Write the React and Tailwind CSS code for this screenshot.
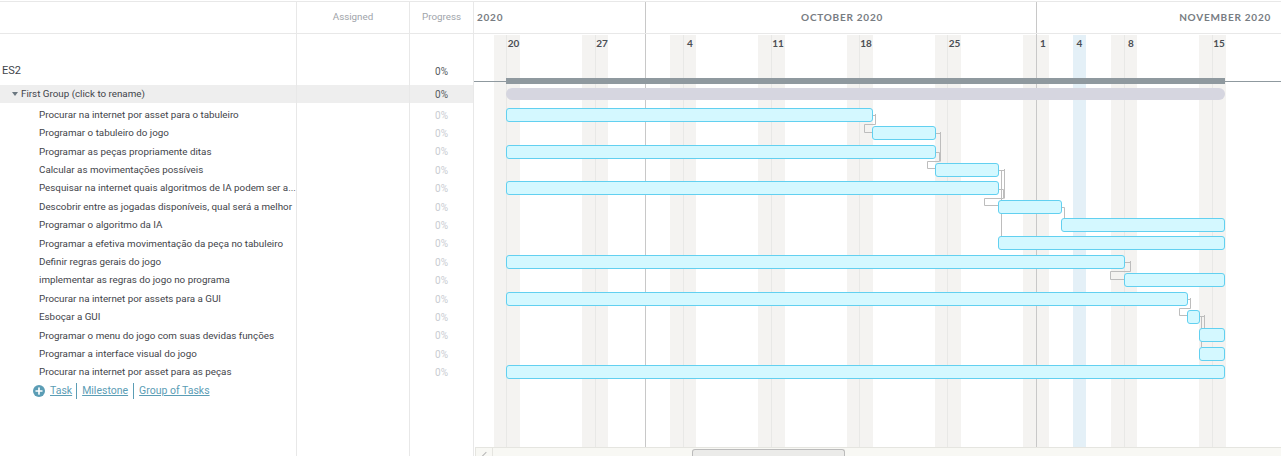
import { Plus } from 'lucide-react'

const tasks = [
  { name: 'Procurar na internet por asset para o tabuleiro', from: 506, to: 873, top: 108 },
  { name: 'Programar o tabuleiro do jogo', from: 872, to: 936, top: 126 },
  { name: 'Programar as peças propriamente ditas', from: 506, to: 936, top: 145 },
  { name: 'Calcular as movimentações possíveis', from: 935, to: 999, top: 163 },
  { name: 'Pesquisar na internet quais algoritmos de IA podem ser a...', from: 506, to: 999, top: 181 },
  { name: 'Descobrir entre as jogadas disponíveis, qual será a melhor', from: 998, to: 1062, top: 200 },
  { name: 'Programar o algoritmo da IA', from: 1061, to: 1225, top: 218 },
  { name: 'Programar a efetiva movimentação da peça no tabuleiro', from: 998, to: 1225, top: 236 },
  { name: 'Definir regras gerais do jogo', from: 506, to: 1125, top: 255 },
  { name: 'implementar as regras do jogo no programa', from: 1124, to: 1225, top: 273 },
  { name: 'Procurar na internet por assets para a GUI', from: 506, to: 1188, top: 292 },
  { name: 'Esboçar a GUI', from: 1187, to: 1200, top: 310 },
  { name: 'Programar o menu do jogo com suas devidas funções', from: 1199, to: 1225, top: 328 },
  { name: 'Programar a interface visual do jogo', from: 1199, to: 1225, top: 347 },
  { name: 'Procurar na internet por asset para as peças', from: 506, to: 1225, top: 365 },
]

const weekends = [
  { from: 494, to: 520, line: 506 },
  { from: 582, to: 608, line: 595 },
  { from: 670, to: 696, line: 683 },
  { from: 758, to: 785, line: 771 },
  { from: 847, to: 873, line: 859 },
  { from: 935, to: 961, line: 947 },
  { from: 1023, to: 1049, line: 1036 },
  { from: 1111, to: 1137, line: 1124 },
  { from: 1199, to: 1226, line: 1212 },
]

const days = [
  { label: '20', x: 513.5 },
  { label: '27', x: 602 },
  { label: '4', x: 690 },
  { label: '11', x: 778 },
  { label: '18', x: 866 },
  { label: '25', x: 954.5 },
  { label: '1', x: 1043 },
  { label: '4', x: 1079.5 },
  { label: '8', x: 1131 },
  { label: '15', x: 1219 },
]

// dependency lines, in page coordinates (the svg viewBox starts at the timeline origin)
const links = [
  'M873 115.5H875.5V124.5H864.5V132.5H872M875.5 114V116',
  'M936 133.5H940.5V161.5M940.5 132V134',
  'M936 152.5H939.5V161.5H927.5V168.5H935',
  'M999 170.5H1004.5V198.5M1004.5 169V171',
  'M1001.5 170.5V236',
  'M999 189.5H1003.5V198.5H984.5V205.5H998',
  'M1062 207.5H1064.5V218',
  'M1125 262.5H1130.5V271.5H1110.5V279.5H1124M1130.5 261V263',
  'M1188 299.5H1190.5V308.5H1179.5V315.5H1187M1190.5 298V300',
  'M1200 316.5H1204.5V328M1204.5 315V317',
  'M1201.5 316.5V347',
]

const HeaderCell = ({ className, children }) => (
  <div className={`flex items-center justify-center border-r border-[#e8e8e8] text-[9.8px] text-[#a0a4aa] ${className}`}>
    {children}
  </div>
)

const Row = ({ className = '', progress, progressClass, children }) => (
  <div className={`grid grid-cols-[297px_113px_64px] ${className}`}>
    <div className="flex items-center border-r border-[#e8e8e8] min-w-0">{children}</div>
    <div className="border-r border-[#e8e8e8]" />
    <div className={`flex items-center justify-center border-r border-[#e8e8e8] text-[10px] ${progressClass}`}>
      {progress}
    </div>
  </div>
)

const App = () => {
  return (
    <div className="w-[1281px] h-[456px] overflow-hidden bg-white flex flex-col font-['Roboto',sans-serif] text-[#3f444a]">
      {/* Header */}
      <div className="mt-px h-[33px] shrink-0 flex border-y border-[#e8e8e8]">
        <div className="w-[297px] border-r border-[#e8e8e8]" />
        <HeaderCell className="w-[113px]">Assigned</HeaderCell>
        <HeaderCell className="w-[64px]">Progress</HeaderCell>
        <div className="flex-1 flex font-['Lato',sans-serif] font-bold text-[10px] tracking-[0.75px] text-[#777c82]">
          <div className="w-[172px] pl-[3px] flex items-center border-r border-[#c8c8c8]">2020</div>
          <div className="w-[391px] pr-[153px] flex items-center justify-end border-r border-[#c8c8c8]">
            OCTOBER 2020
          </div>
          <div className="flex-1 pr-[10px] flex items-center justify-end">NOVEMBER 2020</div>
        </div>
      </div>

      <div className="flex-1 flex min-h-0">
        {/* Task table */}
        <div className="w-[474px] shrink-0 flex flex-col">
          <Row className="h-[51px]" progress="0%" progressClass="pt-[23px] text-[#555a60]">
            <span className="pl-[2px] pt-[23px] text-[11px]">ES2</span>
          </Row>
          <Row className="h-[18px] bg-[#eeeeee]" progress="0%" progressClass="text-[#555a60]">
            <span className="ml-[12px] mr-[3px] h-0 w-0 border-x-[3px] border-t-[4px] border-x-transparent border-t-[#6b7780]" />
            <span className="text-[9.8px]">First Group (click to rename)</span>
          </Row>
          <Row className="h-[3px]" />
          {tasks.map((task) => (
            <Row key={task.top} className="h-[18.4px]" progress="0%" progressClass="text-[#c9ccd2]">
              <span className="pl-[39px] text-[9.8px] whitespace-nowrap">{task.name}</span>
            </Row>
          ))}
          <Row className="flex-1">
            <div className="self-start pl-[33px] pt-px flex items-center text-[10.5px] text-[#5b9db5]">
              <span className="w-3 h-3 mr-[5px] rounded-full bg-[#5b9db5] flex items-center justify-center">
                <Plus size={10} strokeWidth={4} color="#ffffff" />
              </span>
              <span className="underline pr-[4px] border-r border-[#5b9db5]">Task</span>
              <span className="underline px-[5px] border-r border-[#5b9db5]">Milestone</span>
              <span className="underline pl-[5px]">Group of Tasks</span>
            </div>
          </Row>
        </div>

        {/* Timeline canvas */}
        <div className="flex-1 relative overflow-hidden">
          {weekends.map((w) => (
            <div
              key={w.from}
              className="absolute top-px bottom-0 bg-[#f4f3f1]"
              style={{ left: w.from - 474, width: w.to - w.from }}
            >
              <div className="absolute top-0 bottom-0 w-px bg-[#e8e8e6]" style={{ left: w.line - w.from }} />
            </div>
          ))}
          <div className="absolute top-px bottom-0 left-[599px] w-[13px] bg-[#e4f0f7]" />
          <div className="absolute top-0 bottom-0 left-[171px] w-px bg-[#c8c8c8]" />
          <div className="absolute top-0 bottom-0 left-[562px] w-px bg-[#c8c8c8]" />

          {days.map((d) => (
            <span
              key={d.x}
              className="absolute top-[2px] -translate-x-1/2 font-['Lato',sans-serif] font-bold text-[10px] text-[#4a4e54]"
              style={{ left: d.x - 474 }}
            >
              {d.label}
            </span>
          ))}

          {/* Project and group bars */}
          <div className="absolute left-0 right-0 top-[47px] h-px bg-[#8f999f]" />
          <div className="absolute left-[32px] w-[719px] top-[44px] h-[6px] bg-[#8f999f]" />
          <div className="absolute left-[32px] w-[719px] top-[54px] h-[12px] rounded-full bg-[#d6d6e0]" />

          <svg className="absolute left-0 top-0" width="807" height="422" viewBox="474 34 807 422" fill="none">
            {links.map((d) => (
              <path key={d} d={d} stroke="#bdbdbd" strokeWidth="1" />
            ))}
          </svg>

          {tasks.map((task) => (
            <div
              key={task.top}
              className="absolute h-[14px] rounded-[3px] border border-[#62d0f0] bg-[#d4f8ff]"
              style={{ left: task.from - 474, width: task.to - task.from, top: task.top - 34 }}
            />
          ))}

          {/* Scroller */}
          <div className="absolute left-px right-0 bottom-0 h-[9px] bg-[#f8f8f4] border-t border-[#e5e5e0]">
            <div className="absolute left-0 top-0 bottom-0 w-[18px] border-x border-[#e5e5e0] overflow-hidden">
              <div className="absolute left-[7px] top-[3px] w-px h-[8px] bg-[#b5b5b5] rotate-45" />
            </div>
            <div className="absolute left-[217px] top-px bottom-0 w-[153px] rounded-t-[3px] border border-b-0 border-[#bbbbbb] bg-[#ebebe9]" />
          </div>
        </div>
      </div>
    </div>
  )
}

export default App
